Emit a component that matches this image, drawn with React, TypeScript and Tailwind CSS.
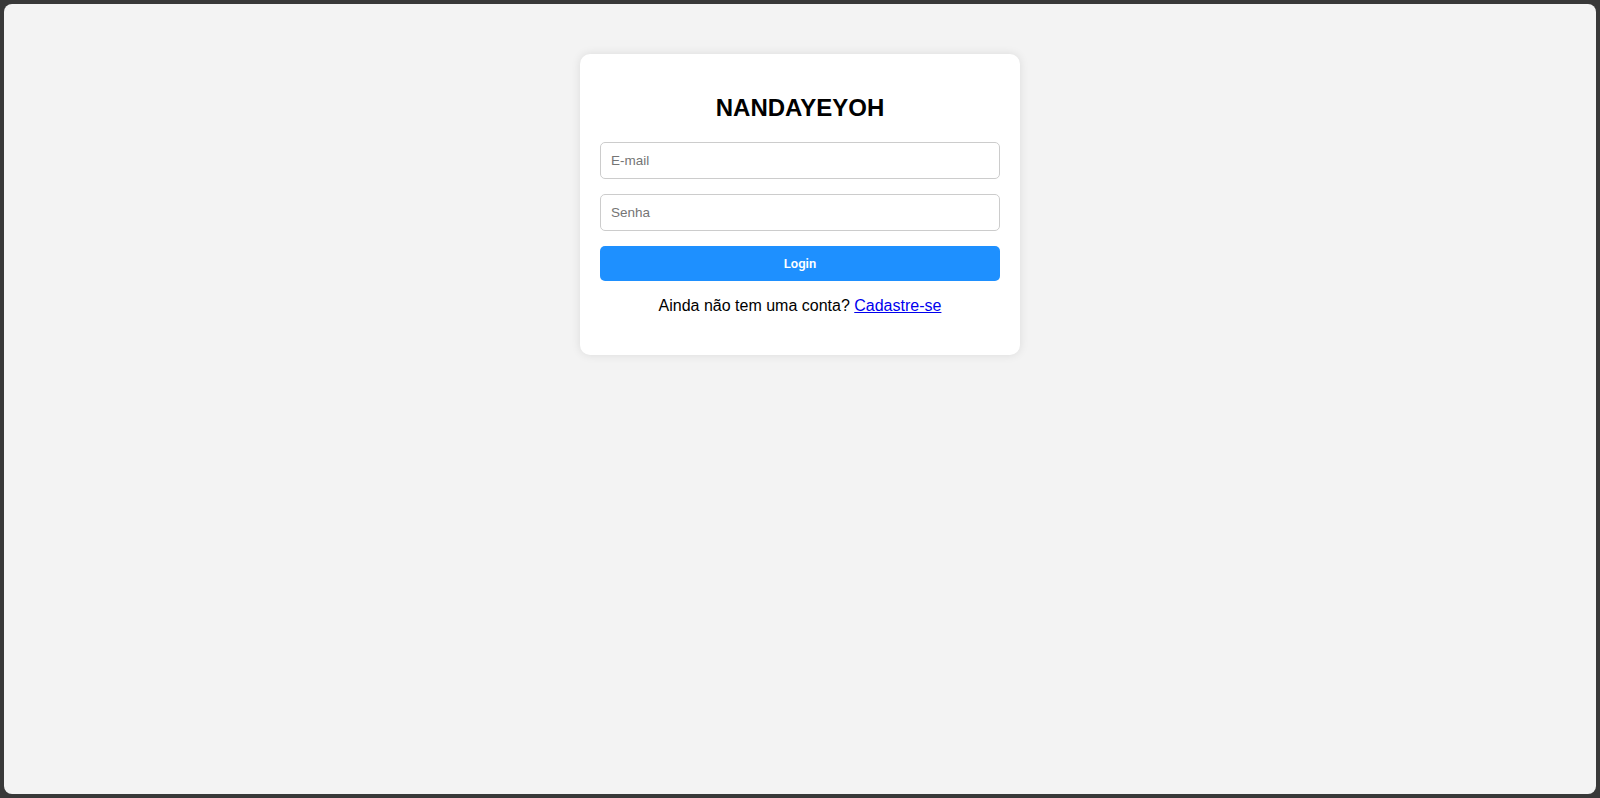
import { useState } from "react";

export default function App() {
  const [email, setEmail] = useState("");
  const [senha, setSenha] = useState("");

  return (
    <div className="h-screen w-full bg-[#383838] p-[4px] font-['Liberation_Sans',Arial,sans-serif]">
      <div className="flex h-full w-full justify-center overflow-hidden rounded-[8px] bg-[#f3f3f3]">
        <div className="mt-[50px] h-fit w-[440px] rounded-[10px] bg-white px-[20px] pt-[20px] pb-[23.5px] shadow-[0_0_10px_rgba(0,0,0,0.1)]">
          <h2 className="mt-[19.92px] mb-[20.5px] text-center text-[24px] font-bold leading-[27.6px] text-black">
            NANDAYEYOH
          </h2>
          <form
            className="flex flex-col"
            onSubmit={(e) => e.preventDefault()}
          >
            <input
              type="email"
              value={email}
              onChange={(e) => setEmail(e.target.value)}
              placeholder="E-mail"
              className="mb-[15px] h-[37px] w-full rounded-[5px] border border-[#cccccc] px-[10px] text-[13.5px] text-black outline-none placeholder:text-[#757575]"
            />
            <input
              type="password"
              value={senha}
              onChange={(e) => setSenha(e.target.value)}
              placeholder="Senha"
              className="mb-[15px] h-[37px] w-full rounded-[5px] border border-[#cccccc] px-[10px] text-[13.5px] text-black outline-none placeholder:text-[#757575]"
            />
            <button
              type="submit"
              className="h-[35px] w-full rounded-[5px] bg-[#1e90ff] font-['Roboto',sans-serif] text-[13px] font-semibold text-white"
            >
              Login
            </button>
          </form>
          <p className="my-[16px] text-center text-[16px] leading-[18.4px] text-black">
            Ainda não tem uma conta?{" "}
            <a href="#" className="text-[#0000ee] underline">
              Cadastre-se
            </a>
          </p>
        </div>
      </div>
    </div>
  );
}
